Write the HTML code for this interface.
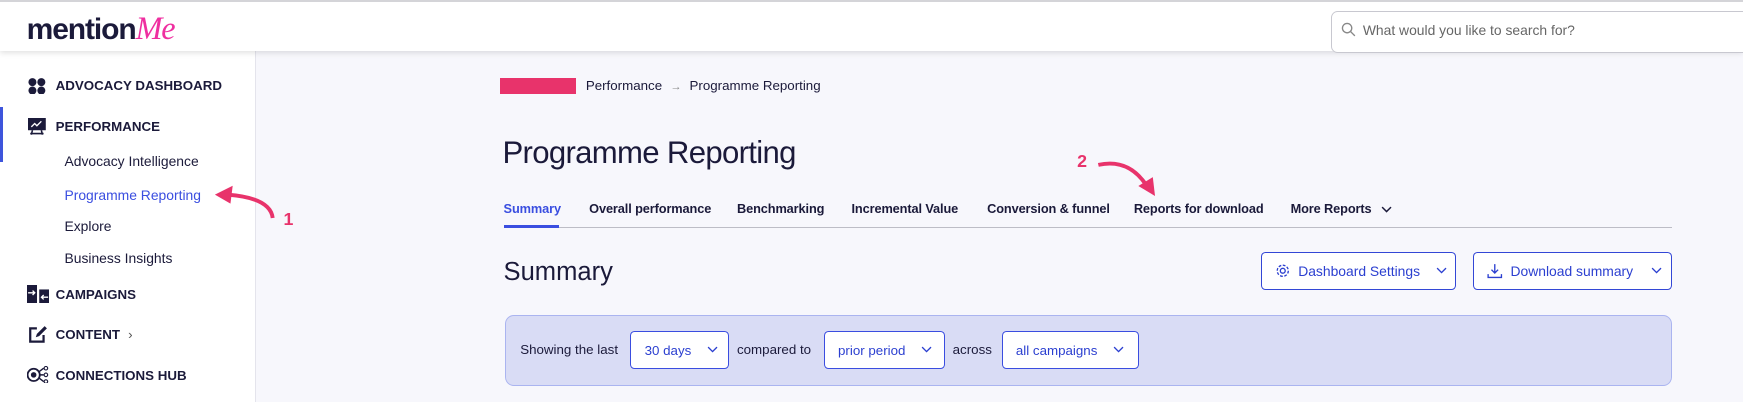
<!DOCTYPE html>
<html><head><style>
*{margin:0;padding:0;box-sizing:border-box}
html,body{width:1743px;height:402px;overflow:hidden;background:#f7f7fc}
body{font-family:"Liberation Sans",sans-serif;color:#1b1a3a}
#w{position:relative;width:1568px;height:362px;zoom:1.1116}
.abs{position:absolute;white-space:nowrap}
.top{position:absolute;left:0;top:0;width:1568px;height:46px;background:#fff;border-top:2px solid #d4d4d8;box-shadow:0 2px 5px rgba(0,0,0,.12);z-index:2}
.side{position:absolute;left:0;top:46px;width:230px;height:320px;background:#fff;border-right:1px solid #e4e4ec}
.nav{font-size:12px;font-weight:bold}
.sub{font-size:12.5px;color:#1b1a3a}
.tab{font-size:11.5px;font-weight:bold;top:181px;color:#1b1a3a;letter-spacing:-.1px}
.btn{position:absolute;border:1px solid #3347d6;border-radius:4px;background:#fff;color:#2b3fd0;font-size:12.5px;display:flex;align-items:center}
.dd{position:absolute;top:298px;height:34px;border:1px solid #3a4de0;border-radius:4px;background:#fff;color:#2b3fd0;font-size:12px;display:flex;align-items:center;padding-left:12px}
.pink{color:#e8336b;font-weight:bold;font-size:16px}
</style></head><body><div id="w">
<div class="top">
 <div class="abs" style="left:24px;top:7px;font-size:27px;font-weight:bold;letter-spacing:-1px;color:#1b1a3a">mention<span style="color:#ef2fa0;font-family:'Liberation Serif',serif;font-style:italic;font-weight:normal;font-size:29px">Me</span></div>
 <div style="position:absolute;left:1197px;top:8px;width:400px;height:38px;border:1px solid #c8c8d0;border-radius:6px;background:#fff"></div>
 <svg class="abs" style="left:1206px;top:18px" width="14" height="14" viewBox="0 0 14 14"><circle cx="5.5" cy="5.5" r="4.2" fill="none" stroke="#888" stroke-width="1.2"/><path d="M8.5 8.5L12.5 12.5" stroke="#888" stroke-width="1.2"/></svg>
 <div class="abs" style="left:1226px;top:18px;font-size:12.5px;color:#666">What would you like to search for?</div>
</div>
<div class="side">
 <div style="position:absolute;left:0;top:50px;width:3px;height:50px;background:#3e55dc"></div>
</div>
<svg class="abs" style="left:25px;top:70px" width="16" height="15"><circle cx="4" cy="3.7" r="3.6" fill="#1b1a3a"/><circle cx="12" cy="3.7" r="3.6" fill="#1b1a3a"/><circle cx="4" cy="11.3" r="3.6" fill="#1b1a3a"/><circle cx="12" cy="11.3" r="3.6" fill="#1b1a3a"/></svg>
<div class="abs nav" style="left:50px;top:70px">ADVOCACY DASHBOARD</div>
<svg class="abs" style="left:25px;top:106px" width="16" height="16"><rect x="0" y="0" width="16" height="11" fill="#1b1a3a"/><path d="M3 8l3-3 2 2 4-4" stroke="#fff" stroke-width="1.2" fill="none"/><path d="M4 11l-1 4M12 11l1 4M2 14h12" stroke="#1b1a3a" stroke-width="1.4"/></svg>
<div class="abs nav" style="left:50px;top:107px">PERFORMANCE</div>
<div class="abs sub" style="left:58px;top:138px">Advocacy Intelligence</div>
<div class="abs sub" style="left:58px;top:168px;color:#3a4ee0">Programme Reporting</div>
<div class="abs sub" style="left:58px;top:196px">Explore</div>
<div class="abs sub" style="left:58px;top:225px">Business Insights</div>
<svg class="abs" style="left:24px;top:256px" width="20" height="17"><rect x="0" y="0" width="9" height="17" fill="#1b1a3a"/><rect x="11" y="4" width="9" height="13" fill="#1b1a3a"/><path d="M1 7h6M5 5l2 2-2 2M19 11h-6M15 9l-2 2 2 2" stroke="#fff" stroke-width="1.2" fill="none"/></svg>
<div class="abs nav" style="left:50px;top:258px">CAMPAIGNS</div>
<svg class="abs" style="left:25px;top:292px" width="18" height="17"><path d="M8 3H2v12h12V9" stroke="#1b1a3a" stroke-width="2" fill="none"/><path d="M7 11l1-3 7-7 2 2-7 7z" fill="#1b1a3a"/></svg>
<div class="abs nav" style="left:50px;top:294px">CONTENT <span style="font-weight:normal;color:#555;margin-left:4px">›</span></div>
<svg class="abs" style="left:24px;top:329px" width="21" height="16"><circle cx="6" cy="8" r="5.5" fill="none" stroke="#1b1a3a" stroke-width="1.6"/><circle cx="6" cy="8" r="2.5" fill="#1b1a3a"/><path d="M11 8h4M11 5l4-3M11 11l4 3" stroke="#1b1a3a" stroke-width="1.3"/><circle cx="17" cy="2" r="1.6" fill="none" stroke="#1b1a3a"/><circle cx="17" cy="8" r="1.6" fill="none" stroke="#1b1a3a"/><circle cx="17" cy="14" r="1.6" fill="none" stroke="#1b1a3a"/></svg>
<div class="abs nav" style="left:50px;top:331px">CONNECTIONS HUB</div>

<div class="abs" style="left:450px;top:70px;width:68px;height:15px;background:#e8336b"></div>
<div class="abs" style="left:527px;top:70px;font-size:12px">Performance <span style="color:#888;font-size:10px;margin:0 4px">→</span> Programme Reporting</div>
<div class="abs" style="left:452px;top:121px;font-size:28px;letter-spacing:-.6px">Programme Reporting</div>
<div class="abs tab" style="left:453px;color:#3a4ee0">Summary</div>
<div class="abs tab" style="left:530px">Overall performance</div>
<div class="abs tab" style="left:663px">Benchmarking</div>
<div class="abs tab" style="left:766px">Incremental Value</div>
<div class="abs tab" style="left:888px">Conversion &amp; funnel</div>
<div class="abs tab" style="left:1020px">Reports for download</div>
<div class="abs tab" style="left:1161px">More Reports</div>
<svg class="abs" style="left:1242px;top:185px" width="10" height="7"><path d="M1 1l4 4 4-4" stroke="#1b1a3a" stroke-width="1.3" fill="none"/></svg>
<div class="abs" style="left:453px;top:204px;width:1051px;height:1px;background:#bdbdc6"></div>
<div class="abs" style="left:453px;top:202px;width:50px;height:3px;background:#3a4ee0"></div>
<div class="abs" style="left:453px;top:232px;font-size:23px">Summary</div>
<div class="btn" style="left:1134px;top:227px;width:176px;height:34px"><svg style="margin-left:12px" width="14" height="14" viewBox="0 0 14 14"><circle cx="7" cy="7" r="2.2" fill="none" stroke="#2b3fd0" stroke-width="1.2"/><circle cx="7" cy="7" r="5" fill="none" stroke="#2b3fd0" stroke-width="1.2" stroke-dasharray="2.5 1.4"/></svg><span style="margin-left:7px">Dashboard Settings</span><svg style="margin-left:14px" width="10" height="7"><path d="M1 1l4 4 4-4" stroke="#2b3fd0" stroke-width="1.2" fill="none"/></svg></div>
<div class="btn" style="left:1325px;top:227px;width:179px;height:34px"><svg style="margin-left:12px" width="14" height="14"><path d="M7 1v8M4 6l3 3 3-3M1 10v3h12v-3" stroke="#2b3fd0" stroke-width="1.2" fill="none"/></svg><span style="margin-left:7px">Download summary</span><svg style="margin-left:16px" width="10" height="7"><path d="M1 1l4 4 4-4" stroke="#2b3fd0" stroke-width="1.2" fill="none"/></svg></div>
<div class="abs" style="left:454px;top:283px;width:1050px;height:64px;background:#d9dcf5;border:1px solid #aab4f0;border-radius:8px"></div>
<div class="abs" style="left:468px;top:308px;font-size:12px">Showing the last</div>
<div class="dd" style="left:567px;width:89px">30 days<svg style="margin-left:14px" width="10" height="7"><path d="M1 1l4 4 4-4" stroke="#2b3fd0" stroke-width="1.2" fill="none"/></svg></div>
<div class="abs" style="left:663px;top:308px;font-size:12px">compared to</div>
<div class="dd" style="left:741px;width:109px">prior period<svg style="margin-left:14px" width="10" height="7"><path d="M1 1l4 4 4-4" stroke="#2b3fd0" stroke-width="1.2" fill="none"/></svg></div>
<div class="abs" style="left:857px;top:308px;font-size:12px">across</div>
<div class="dd" style="left:901px;width:124px">all campaigns<svg style="margin-left:14px" width="10" height="7"><path d="M1 1l4 4 4-4" stroke="#2b3fd0" stroke-width="1.2" fill="none"/></svg></div>

<svg class="abs" style="left:185px;top:160px" width="70" height="40"><path d="M60 36 Q58 18 20 15" stroke="#e8336b" stroke-width="3.5" fill="none"/><path d="M8 15 L24 7 L22 23 Z" fill="#e8336b"/></svg>
<div class="abs pink" style="left:255px;top:188px">1</div>
<div class="abs pink" style="left:969px;top:136px">2</div>
<svg class="abs" style="left:985px;top:140px" width="62" height="40"><path d="M3 8 Q30 2 46 26" stroke="#e8336b" stroke-width="3.5" fill="none"/><path d="M39 27 L54 36 L52 19 Z" fill="#e8336b"/></svg>
</div></body></html>
